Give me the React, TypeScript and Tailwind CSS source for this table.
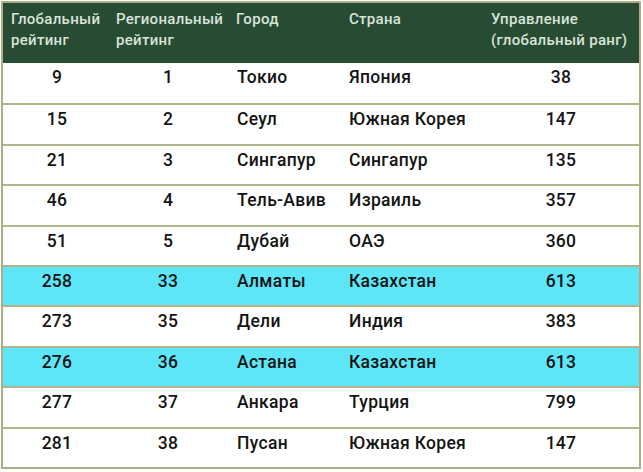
const rows = [
  { g: '9', r: '1', city: 'Токио', country: 'Япония', gov: '38' },
  { g: '15', r: '2', city: 'Сеул', country: 'Южная Корея', gov: '147' },
  { g: '21', r: '3', city: 'Сингапур', country: 'Сингапур', gov: '135' },
  { g: '46', r: '4', city: 'Тель-Авив', country: 'Израиль', gov: '357' },
  { g: '51', r: '5', city: 'Дубай', country: 'ОАЭ', gov: '360' },
  { g: '258', r: '33', city: 'Алматы', country: 'Казахстан', gov: '613', hl: true },
  { g: '273', r: '35', city: 'Дели', country: 'Индия', gov: '383' },
  { g: '276', r: '36', city: 'Астана', country: 'Казахстан', gov: '613', hl: true },
  { g: '277', r: '37', city: 'Анкара', country: 'Турция', gov: '799' },
  { g: '281', r: '38', city: 'Пусан', country: 'Южная Корея', gov: '147' },
]

const cols = 'grid grid-cols-[108px_120px_113px_142px_1fr]'

export default function App() {
  return (
    <div className="w-[643px] h-[472px] bg-white pt-[1px] pl-[1px]" style={{ fontFamily: 'Roboto, "Noto Sans", sans-serif' }}>
      <div className="w-[640px] border-[2px] border-[#aeae86]">
        <div className={`${cols} h-[60px] bg-[#284c33] text-[#d9e3d9] text-[15px] tracking-[0.3px] leading-[21px] font-medium pt-[6px]`}>
          <div className="pl-[8px]">Глобальный<br />рейтинг</div>
          <div className="pl-[5px]">Региональный<br />рейтинг</div>
          <div className="pl-[5px]">Город</div>
          <div className="pl-[5px]">Страна</div>
          <div className="pl-[5px]">Управление<br />(глобальный ранг)</div>
        </div>
        {rows.map((row, i) => (
          <div
            key={row.g}
            className={`${cols} h-[40.4px] pt-[3px] text-[17.5px] tracking-[0.3px] leading-[22px] font-medium text-[#141414] ${i > 0 ? 'border-t-[2px] border-[#b3b38c]' : ''} ${row.hl ? 'bg-[#5ce6f8]' : 'bg-white'}`}
          >
            <div className="text-center">{row.g}</div>
            <div className="text-center pr-[6px]">{row.r}</div>
            <div className="pl-[6px]">{row.city}</div>
            <div className="pl-[5px]">{row.country}</div>
            <div className="text-center pr-[3px]">{row.gov}</div>
          </div>
        ))}
      </div>
    </div>
  )
}
